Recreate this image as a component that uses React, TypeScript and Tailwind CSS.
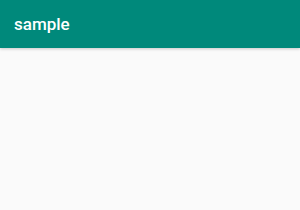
export default function App() {
  return (
    <div className="w-[300px] h-[210px] bg-[#fafafa] flex flex-col" style={{ fontFamily: "Roboto, 'Noto Sans', sans-serif" }}>
      <header className="h-[48px] bg-[#00897b] flex items-center px-[14px] pt-[2px] shadow-[0_1px_3px_rgba(0,0,0,0.2)]">
        <h1 className="text-white text-[17px] font-medium">sample</h1>
      </header>
      <main className="flex-1" />
    </div>
  );
}
